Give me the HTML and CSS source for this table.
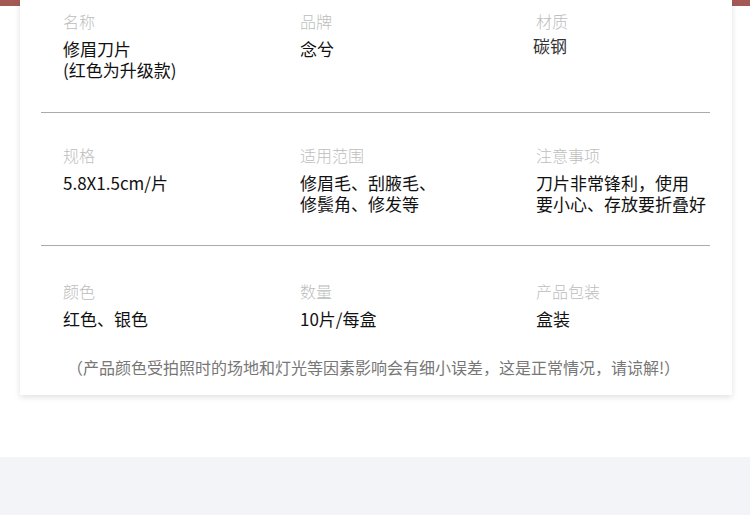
FILE: index.html
```html
<!DOCTYPE html>
<html lang="zh-CN">
<head>
<meta charset="utf-8">
<title>产品参数</title>
<link rel="stylesheet" href="styles.css">
</head>
<body>
<div class="top-band"></div>
<section class="card">
  <div class="row row-first">
    <div class="cell">
      <div class="label">名称</div>
      <div class="value">修眉刀片<br>(红色为升级款)</div>
    </div>
    <div class="cell">
      <div class="label">品牌</div>
      <div class="value">念兮</div>
    </div>
    <div class="cell">
      <div class="label">材质</div>
      <div class="value value-shift">碳钢</div>
    </div>
  </div>
  <div class="row">
    <div class="cell">
      <div class="label">规格</div>
      <div class="value">5.8X1.5cm/片</div>
    </div>
    <div class="cell">
      <div class="label">适用范围</div>
      <div class="value">修眉毛、刮腋毛、<br>修鬓角、修发等</div>
    </div>
    <div class="cell">
      <div class="label">注意事项</div>
      <div class="value">刀片非常锋利，使用<br>要小心、存放要折叠好</div>
    </div>
  </div>
  <div class="row row-last">
    <div class="cell">
      <div class="label">颜色</div>
      <div class="value">红色、银色</div>
    </div>
    <div class="cell">
      <div class="label">数量</div>
      <div class="value">10片/每盒</div>
    </div>
    <div class="cell">
      <div class="label">产品包装</div>
      <div class="value">盒装</div>
    </div>
  </div>
  <p class="note">（产品颜色受拍照时的场地和灯光等因素影响会有细小误差，这是正常情况，请谅解!）</p>
</section>
<div class="bottom-band"></div>
</body>
</html>
```
FILE: styles.css
```css
html, body {
  margin: 0;
  padding: 0;
}
body {
  width: 750px;
  height: 515px;
  overflow: hidden;
  background: #ffffff;
  font-family: "Noto Sans CJK SC", "Noto Sans", sans-serif;
  position: relative;
}
.top-band {
  height: 6px;
  background: #a35a55;
}
.card {
  margin: -6px 18px 0 20px;
  height: 395px;
  box-sizing: border-box;
  background: #ffffff;
  box-shadow: 0 2px 6px rgba(0, 0, 0, 0.13);
  padding: 0 22px 0 21px;
  position: relative;
  display: flex;
  flex-direction: column;
}
.row {
  display: grid;
  grid-template-columns: 237px 236px 1fr;
  padding: 32px 0 0 22px;
  height: 133px;
  flex: none;
  box-sizing: border-box;
  border-bottom: 1px solid #ababab;
}
.row-first {
  padding-top: 11px;
  height: 113px;
}
.row-last {
  border-bottom: none;
  padding-top: 35px;
  height: 111px;
}
.label {
  font-size: 16px;
  line-height: 20px;
  color: #bdbdbd;
  font-weight: 300;
}
.value {
  margin-top: 7px;
  font-size: 17px;
  line-height: 21px;
  color: #111111;
}
.value-shift {
  margin-top: 4px;
  margin-left: -3px;
  color: #333333;
}
.note {
  margin: 0;
  text-align: center;
  font-size: 16px;
  line-height: 20px;
  color: #777777;
  padding: 0 4px 0 0;
}
.bottom-band {
  position: absolute;
  left: 0;
  right: 0;
  top: 457px;
  height: 58px;
  background: #f3f4f8;
}
```
